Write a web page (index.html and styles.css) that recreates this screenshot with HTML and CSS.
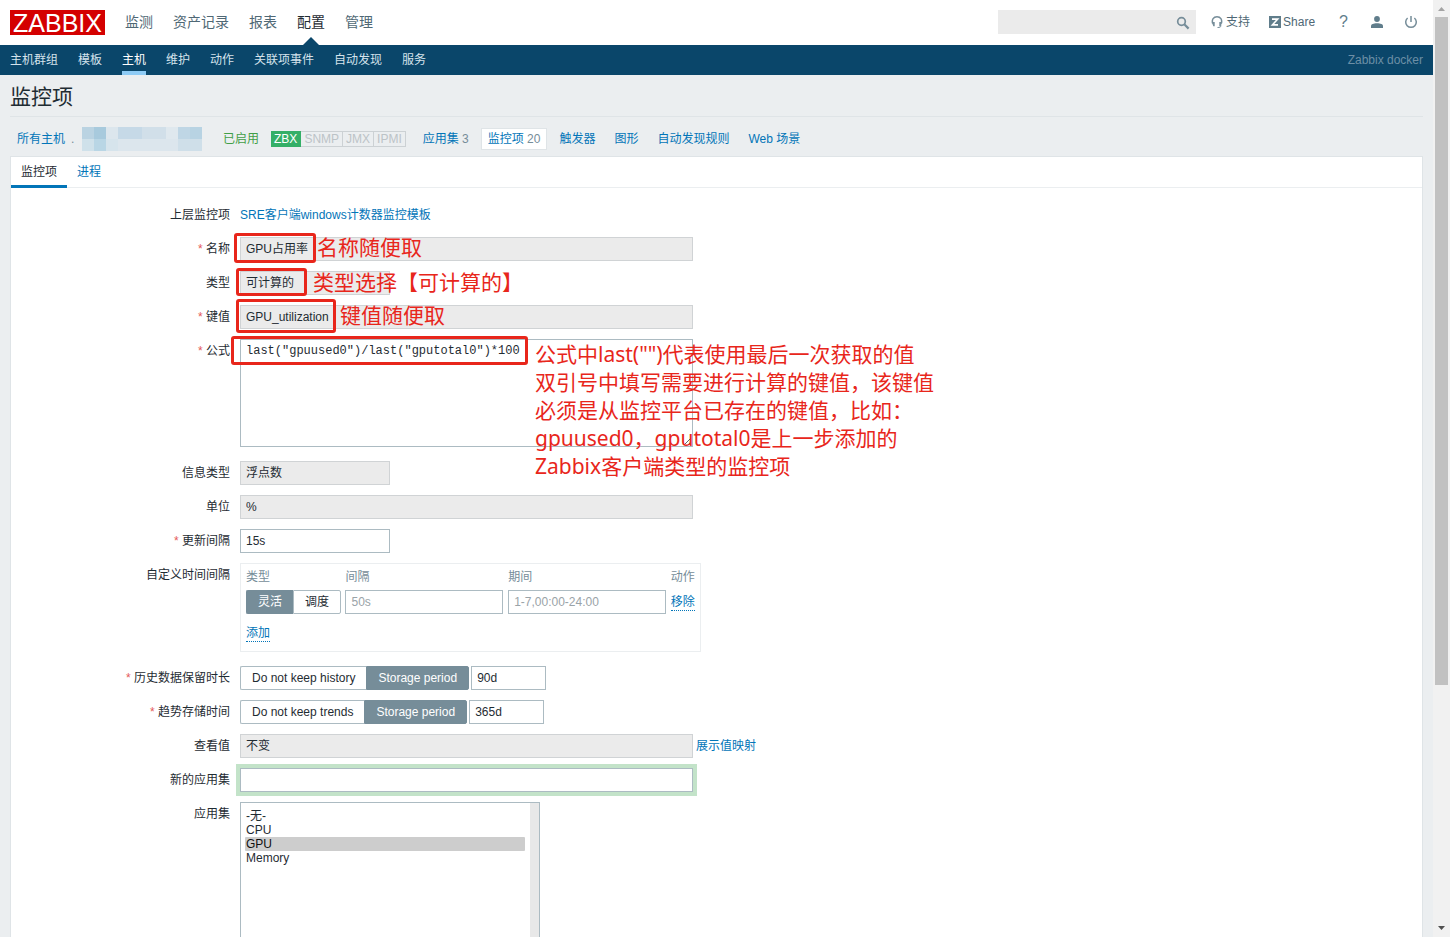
FILE: index.html
```html
<!DOCTYPE html>
<html lang="zh-CN">
<head>
<meta charset="utf-8">
<title>监控项</title>
<link rel="stylesheet" href="styles.css">
</head>
<body>
<div class="app">
  <header class="header">
    <a class="logo" href="#">ZABBIX</a>
    <nav class="top-nav">
      <a href="#">监测</a>
      <a href="#">资产记录</a>
      <a href="#">报表</a>
      <a href="#" class="current">配置</a>
      <a href="#">管理</a>
    </nav>
    <form class="search">
      <input type="text" aria-label="搜索">
      <button type="button" aria-label="搜索">
        <svg width="14" height="14" viewBox="0 0 14 14"><circle cx="5.5" cy="5.5" r="3.8" fill="none" stroke="#768d99" stroke-width="1.7"/><path d="M8.3 8.3l4.3 4.3" stroke="#768d99" stroke-width="2.2"/></svg>
      </button>
    </form>
    <div class="tools">
      <a href="#" class="tool">
        <svg width="12" height="14" viewBox="0 0 12 14"><path d="M1.700 8.500C.5 4.500 2.500 1.800 6 1.800s5.500 2.700 4.300 6.700" fill="none" stroke="#768d99" stroke-width="1.500"/><path d="M.8 7h2.900v4.200H2.300zM11.200 7H8.300v4.200h1.400z" fill="#768d99"/><path d="M10 10.500c0 1.500-1.200 2-3.500 2" fill="none" stroke="#768d99"/></svg>
        <span>支持</span>
      </a>
      <a href="#" class="tool share">
        <svg width="12" height="12" viewBox="0 0 12 12"><path d="M0 0h12v12H0z" fill="#607d8b"/><path d="M3 3.200h5.600L3.500 8.800H9" fill="none" stroke="#fff" stroke-width="1.700"/></svg>
        <span>Share</span>
      </a>
      <a href="#" class="help">?</a>
      <a href="#" class="glyph" aria-label="用户">
        <svg width="14" height="14" viewBox="0 0 14 14" fill="#607d8b"><circle cx="7" cy="4" r="2.900"/><path d="M1 13v-2c0-1.800 2.500-2.800 6-2.800s6 1 6 2.800v2z"/></svg>
      </a>
      <a href="#" class="glyph" aria-label="退出">
        <svg width="14" height="14" viewBox="0 0 14 14" fill="none" stroke="#768d99" stroke-width="1.500"><path d="M3.600 3A5.300 5.300 0 1 0 10.400 3M7 1v6"/></svg>
      </a>
    </div>
  </header>

  <nav class="sub-nav">
    <a href="#">主机群组</a>
    <a href="#">模板</a>
    <a href="#" class="current">主机</a>
    <a href="#">维护</a>
    <a href="#">动作</a>
    <a href="#">关联项事件</a>
    <a href="#">自动发现</a>
    <a href="#">服务</a>
    <span class="server">Zabbix docker</span>
  </nav>

  <main class="content">
    <h1>监控项</h1>
    <div class="crumbs">
      <a href="#">所有主机</a>
      <span class="host"><span class="dot">.</span>
        <svg width="120" height="24" viewBox="0 0 120 24" aria-hidden="true">
          <path d="M0 0h120v24H0z" fill="#dce6ed"/>
          <path d="M0 0h12v12H0z" fill="#bad3e2"/><path d="M12 0h12v12H12z" fill="#a8cadd"/>
          <path d="M0 12h12v12H0z" fill="#cfe1ea"/><path d="M12 12h12v12H12z" fill="#b9d6e5"/>
          <path d="M36 0h24v12H36z" fill="#c6d9e7"/><path d="M60 0h24v12H60z" fill="#d1dfe9"/>
          <path d="M84 0h12v12H84z" fill="#dfe8ee"/><path d="M96 0h12v12H96z" fill="#bfd6e5"/>
          <path d="M108 0h12v12H108z" fill="#b8d3e3"/><path d="M96 12h24v12H96z" fill="#cfdfe9"/>
          <path d="M24 12h12v12H24z" fill="#d6e4ec"/>
        </svg>
      </span>
      <span class="enabled">已启用</span>
      <span class="badges"><span class="on">ZBX</span><span>SNMP</span><span>JMX</span><span>IPMI</span></span>
      <a href="#">应用集 <small>3</small></a>
      <a href="#" class="selected">监控项 <small>20</small></a>
      <a href="#">触发器</a>
      <a href="#">图形</a>
      <a href="#">自动发现规则</a>
      <a href="#">Web 场景</a>
    </div>

    <section class="panel">
      <nav class="tabs">
        <a href="#" class="current">监控项</a>
        <a href="#">进程</a>
      </nav>
      <form class="form">
        <div class="row">
          <span class="label">上层监控项</span>
          <div class="field"><a href="#">SRE客户端windows计数器监控模板</a></div>
        </div>
        <div class="row">
          <label class="label required" for="name">名称</label>
          <div class="field"><input class="wide" id="name" type="text" value="GPU占用率" readonly>
            <div class="mark mark-name"></div><div class="note note-name">名称随便取</div></div>
        </div>
        <div class="row">
          <label class="label" for="type">类型</label>
          <div class="field"><input class="medium" id="type" type="text" value="可计算的" readonly>
            <div class="mark mark-type"></div><div class="note note-type">类型选择【可计算的】</div></div>
        </div>
        <div class="row">
          <label class="label required" for="key">键值</label>
          <div class="field"><input class="wide" id="key" type="text" value="GPU_utilization" readonly>
            <div class="mark mark-key"></div><div class="note note-key">键值随便取</div></div>
        </div>
        <div class="row after-tall">
          <label class="label required" for="formula">公式</label>
          <div class="field"><textarea class="wide" id="formula" spellcheck="false">last("gpuused0")/last("gputotal0")*100</textarea>
            <div class="mark mark-formula"></div>
            <div class="note note-formula">公式中last("")代表使用最后一次获取的值<br>双引号中填写需要进行计算的键值，该键值<br>必须是从监控平台已存在的键值，比如：<br>gpuused0，gputotal0是上一步添加的<br>Zabbix客户端类型的监控项</div></div>
        </div>
        <div class="row">
          <label class="label" for="info">信息类型</label>
          <div class="field"><input class="medium" id="info" type="text" value="浮点数" readonly></div>
        </div>
        <div class="row">
          <label class="label" for="unit">单位</label>
          <div class="field"><input class="wide" id="unit" type="text" value="%" readonly></div>
        </div>
        <div class="row">
          <label class="label required" for="delay">更新间隔</label>
          <div class="field"><input class="medium" id="delay" type="text" value="15s"></div>
        </div>
        <div class="row after-tall">
          <span class="label">自定义时间间隔</span>
          <div class="field">
            <div class="intervals">
              <table>
                <thead><tr><th>类型</th><th>间隔</th><th>期间</th><th>动作</th></tr></thead>
                <tbody>
                  <tr>
                    <td><div class="segments">
                      <input type="radio" name="kind" id="kind1" checked><label for="kind1">灵活</label>
                      <input type="radio" name="kind" id="kind2"><label for="kind2">调度</label>
                    </div></td>
                    <td><input class="cell" type="text" placeholder="50s" aria-label="间隔"></td>
                    <td><input class="cell" type="text" placeholder="1-7,00:00-24:00" aria-label="期间"></td>
                    <td><button type="button" class="link">移除</button></td>
                  </tr>
                </tbody>
              </table>
              <button type="button" class="link add">添加</button>
            </div>
          </div>
        </div>
        <div class="row">
          <label class="label required" for="history">历史数据保留时长</label>
          <div class="field inline">
            <div class="segments">
              <input type="radio" name="hist" id="hist1"><label for="hist1">Do not keep history</label>
              <input type="radio" name="hist" id="hist2" checked><label for="hist2">Storage period</label>
            </div>
            <input class="small" id="history" type="text" value="90d">
          </div>
        </div>
        <div class="row">
          <label class="label required" for="trends">趋势存储时间</label>
          <div class="field inline">
            <div class="segments">
              <input type="radio" name="trend" id="trend1"><label for="trend1">Do not keep trends</label>
              <input type="radio" name="trend" id="trend2" checked><label for="trend2">Storage period</label>
            </div>
            <input class="small" id="trends" type="text" value="365d">
          </div>
        </div>
        <div class="row">
          <label class="label" for="show">查看值</label>
          <div class="field inline map"><input class="wide" id="show" type="text" value="不变" readonly><a href="#">展示值映射</a></div>
        </div>
        <div class="row">
          <label class="label" for="newapp">新的应用集</label>
          <div class="field"><input class="wide focused" id="newapp" type="text"></div>
        </div>
        <div class="row">
          <label class="label" for="apps">应用集</label>
          <div class="field">
            <select id="apps" class="list" multiple size="10">
              <option>-无-</option><option>CPU</option><option selected>GPU</option><option>Memory</option>
            </select>
          </div>
        </div>
      </form>
    </section>
  </main>
</div>
<div class="scrollbar" aria-hidden="true">
  <svg width="17" height="17" viewBox="0 0 17 17"><path d="M5 11l3.500-4 3.500 4z" fill="#a3a3a3"/></svg>
  <div class="track"><div class="thumb"></div></div>
  <svg width="17" height="17" viewBox="0 0 17 17"><path d="M5 6l3.500 4L12 6z" fill="#505050"/></svg>
</div>
</body>
</html>
```
FILE: styles.css
```css
* { box-sizing: border-box; }

body {
  margin: 0;
  height: 100vh;
  display: flex;
  overflow: hidden;
  background: #ebeef0;
  color: #1f2c33;
  font-family: "Liberation Sans", "Noto Sans CJK SC", sans-serif;
  font-size: 12px;
  line-height: 24px;
}

input, textarea, select, button { font: inherit; color: inherit; }
a { color: #0275b8; text-decoration: none; }

.app {
  flex: 1;
  min-width: 0;
  display: flex;
  flex-direction: column;
}

/* Header */
.header {
  flex: none;
  height: 45px;
  display: flex;
  align-items: flex-start;
  padding: 10px 15px 0 10px;
  background: #fff;
}
.logo {
  width: 95px;
  height: 25px;
  background: #d40000;
  color: #fff;
  font-size: 25px;
  line-height: 26px;
  text-align: center;
}
.top-nav {
  display: flex;
  gap: 20px;
  margin-left: 20px;
  align-self: stretch;
  font-size: 14px;
}
.top-nav a {
  position: relative;
  line-height: 25px;
  color: #4f6875;
}
.top-nav .current { color: #1f2c33; }
.top-nav .current::after {
  content: "";
  position: absolute;
  bottom: 0;
  left: 6px;
  border: 8px solid transparent;
  border-top: 0;
  border-bottom-color: #0a466a;
}
.search {
  position: relative;
  margin-left: auto;
  width: 198px;
}
.search input {
  display: block;
  width: 100%;
  height: 24px;
  padding: 0 28px 0 6px;
  border: 1px solid #ebebeb;
  background: #ebebeb;
}
.search button {
  position: absolute;
  top: 0;
  right: 4px;
  width: 16px;
  height: 24px;
  padding: 0;
  border: 0;
  background: none;
}
.search svg { display: block; margin-top: 1px; }
.tools {
  display: flex;
  align-items: center;
  margin-left: 15px;
}
.tools a { color: #4f6875; }
.tool {
  display: flex;
  align-items: center;
  gap: 3px;
}
.share { margin-left: 19px; gap: 2px; }
.tools .help {
  margin: 0 22px 0 24px;
  font-size: 16px;
  color: #607d8b;
}
.glyph svg { display: block; }
.glyph + .glyph { margin-left: 20px; }

.sub-nav {
  flex: none;
  display: flex;
  gap: 20px;
  padding: 0 10px;
  background: #0a466a;
}
.sub-nav a {
  height: 30px;
  line-height: 31px;
  color: #d5e3ec;
}
.sub-nav .current {
  color: #fff;
  border-bottom: 4px solid #8ecbf5;
}
.server {
  margin-left: auto;
  line-height: 30px;
  color: #6c8fa6;
}

/* Content */
.content {
  flex: 1;
  min-height: 0;
  display: flex;
  flex-direction: column;
  padding: 0 10px;
}
h1 {
  margin: 0;
  padding-top: 2px;
  border-bottom: 1px solid #dfe4e7;
  font-size: 21px;
  font-weight: 400;
  line-height: 39px;
}
.crumbs {
  display: flex;
  align-items: center;
  gap: 5px;
  padding: 10px 0 5px;
  height: 39px;
}
.crumbs > a { padding: 0 6px; border: 1px solid transparent; line-height: 20px; }
.crumbs small { font-size: 12px; color: #768d99; }
.crumbs .selected { background: #fff; border-color: #dfe4e7; }
.host { display: flex; gap: 7px; margin-left: -6px; }
.host svg { display: block; }
.dot { width: 4px; color: #768d99; }
.enabled { margin-left: 16px; color: #429e47; }
.badges {
  display: flex;
  margin: 0 5px 0 7px;
  color: #bcc3c7;
}
.badges span {
  height: 16px;
  padding: 0 3px;
  border: 1px solid #ccd1d4;
  border-left: 0;
  line-height: 14px;
}
.badges .on {
  background: #34af67;
  border-color: #34af67;
  color: #fff;
}

.panel {
  flex: 1;
  min-height: 0;
  background: #fff;
  border: 1px solid #dfe4e7;
  border-bottom: 0;
  overflow: hidden;
}
.tabs {
  display: flex;
  border-bottom: 1px solid #ebeef0;
}
.tabs a { padding: 0 10px; height: 30px; line-height: 30px; }
.tabs .current {
  height: 31px;
  margin-bottom: -1px;
  color: #1f2c33;
  border-bottom: 3px solid #0275b8;
}

/* Form */
.form {
  display: flex;
  flex-direction: column;
  gap: 10px;
  padding-top: 15px;
}
.row {
  display: grid;
  grid-template-columns: 219px 1fr;
  column-gap: 10px;
}
.after-tall { margin-bottom: 4px; }
.label { text-align: right; }
.required::before { content: "* "; color: #e45959; }
.field { position: relative; }
.inline { display: flex; gap: 2px; }
.map { gap: 3px; }
.form input[type="text"], textarea {
  display: block;
  height: 24px;
  padding: 0 5px;
  border: 1px solid #acbbc2;
  border-radius: 0;
  background: #fff;
  outline: 0;
}
.form input[type="text"]:read-only { background: #ebebeb; border-color: #d0d3d5; }
.form ::placeholder { color: #9aa3a8; }
.wide { width: 453px; }
.medium { width: 150px; }
.small { width: 75px; }
.cell { width: 158px; }
.form textarea {
  height: 108px;
  padding: 4px 5px;
  font-family: "Liberation Mono", monospace;
  line-height: 14px;
}
.form .focused { box-shadow: 0 0 0 4px #c3e3c9; }

.segments { display: flex; }
.segments input { position: absolute; opacity: 0; margin: 0; }
.segments label {
  height: 24px;
  padding: 0 11px;
  border: 1px solid #acbbc2;
  line-height: 22px;
}
.segments label:first-of-type { border-radius: 2px 0 0 2px; border-right: 0; }
.segments label:last-of-type { border-radius: 0 2px 2px 0; }
.segments input:checked + label {
  background: #768d99;
  border-color: #768d99;
  color: #fff;
}

.intervals {
  width: 461px;
  padding: 0 5px 5px;
  border: 1px solid #ebeef0;
}
table { width: 100%; border-collapse: collapse; }
th, td { padding: 0 4px 0 0; text-align: left; }
th { height: 26px; font-weight: 400; color: #768d99; }
th:last-child, td:last-child { padding-right: 0; }
.link {
  padding: 0;
  border: 0;
  border-bottom: 1px dotted #0275b8;
  background: none;
  color: #0275b8;
  line-height: 15px;
}
.add { display: block; margin: 12px 0 4px; }

.list {
  display: block;
  width: 300px;
  height: 164px;
  padding: 3px 14px 6px 4px;
  border: 1px solid #acbbc2;
  border-radius: 0;
  background: linear-gradient(#e8e8e8, #e8e8e8) right / 9px 100% no-repeat #fff;
  overflow: hidden;
  outline: 0;
}
.list option { padding: 0 1px; min-height: 14px; line-height: 14px; }
.list option:checked { background: #cdcdcd; border-radius: 1px; }

/* Annotations laid over the form */
.mark {
  position: absolute;
  border: 3px solid #e8261b;
  border-radius: 3px;
}
.note {
  position: absolute;
  color: #e8261b;
  font-family: "Noto Sans", "Noto Sans CJK SC", sans-serif;
  font-size: 21px;
  line-height: 28px;
  white-space: nowrap;
}
.mark-name { left: -6px; top: -4px; width: 82px; height: 30px; }
.mark-type { left: -4px; top: -3px; width: 71px; height: 28px; }
.mark-key { left: -4px; top: -6px; width: 100px; height: 34px; }
.mark-formula { left: -9px; top: -3px; width: 297px; height: 29px; }
.note-name { left: 77px; top: -4px; }
.note-type { left: 73px; top: -3px; }
.note-key { left: 100px; top: -4px; }
.note-formula { left: 295px; top: 1px; }

/* Window scrollbar */
.scrollbar {
  flex: none;
  width: 17px;
  display: flex;
  flex-direction: column;
  background: #f1f1f1;
}
.scrollbar svg { display: block; }
.track { flex: 1; padding: 0 2px; }
.thumb { height: 74%; background: #c1c1c1; }
```
